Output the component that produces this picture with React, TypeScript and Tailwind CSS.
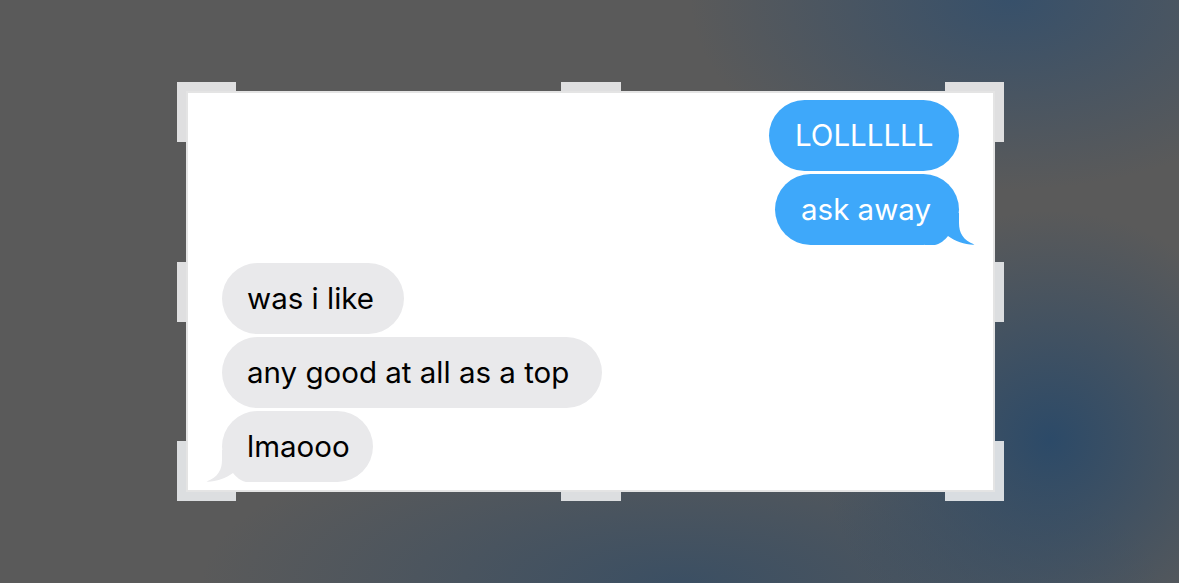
import React from "react";

const font = { fontFamily: "Inter, 'Liberation Sans', sans-serif" };

function Tail({ color, side }: { color: string; side: "left" | "right" }) {
  return (
    <svg
      width="50"
      height="32"
      viewBox="0 0 50 32"
      className={
        side === "right"
          ? "absolute -right-[16px] bottom-0"
          : "absolute -left-[16px] bottom-0 -scale-x-100"
      }
    >
      <path
        d="M34 0 L34 10 C34 20 38 27 49.5 31.6 C41 32 30 28.5 23 23 C20 27 15 31 10 32 L0 32 L0 0 Z"
        fill={color}
      />
    </svg>
  );
}

function Bubble({
  text,
  me,
  tail,
  w,
}: {
  text: string;
  me?: boolean;
  tail?: boolean;
  w: string;
}) {
  return (
    <div
      className={
        (me
          ? "relative h-[71px] rounded-[35.5px] bg-[#3ea8fa] text-white pl-[26px] flex items-center text-[29.5px] leading-none "
          : "relative h-[71px] rounded-[35.5px] bg-[#e9e9eb] text-black pl-[25px] flex items-center text-[29.5px] leading-none ") + w
      }
    >
      {tail && <Tail color={me ? "#3ea8fa" : "#e9e9eb"} side={me ? "right" : "left"} />}
      <span className="relative whitespace-nowrap">{text}</span>
    </div>
  );
}

export default function App() {
  return (
    <div
      className="w-full h-[583px] flex items-center justify-center bg-[#5a5a5a] bg-[radial-gradient(ellipse_320px_190px_at_1010px_0px,#37506a,transparent),radial-gradient(ellipse_230px_230px_at_1050px_440px,#2c4a68,transparent),radial-gradient(ellipse_480px_160px_at_680px_583px,#3b4f63,transparent)]"
      style={font}
    >
      <div className="relative w-[827px] h-[419px] ml-[2px]">
        {/* handles */}
        <div className="absolute left-0 top-0 w-[59px] h-[9px] bg-[#dfdfe0]" />
        <div className="absolute left-0 top-0 w-[9px] h-[60px] bg-[#dfdfe0]" />
        <div className="absolute right-0 top-0 w-[59px] h-[9px] bg-[#dfdfe0]" />
        <div className="absolute right-0 top-0 w-[9px] h-[60px] bg-[#dfdfe0]" />
        <div className="absolute left-0 bottom-0 w-[59px] h-[9px] bg-[#dcdee0]" />
        <div className="absolute left-0 bottom-0 w-[9px] h-[60px] bg-[#dcdee0]" />
        <div className="absolute right-0 bottom-0 w-[59px] h-[9px] bg-[#d9dde1]" />
        <div className="absolute right-0 bottom-0 w-[9px] h-[60px] bg-[#d9dde1]" />
        <div className="absolute left-[384px] top-0 w-[60px] h-[9px] bg-[#dfdfe0]" />
        <div className="absolute left-[384px] bottom-0 w-[60px] h-[9px] bg-[#dcdee0]" />
        <div className="absolute left-0 top-[180px] w-[9px] h-[60px] bg-[#dfdfe0]" />
        <div className="absolute right-0 top-[180px] w-[9px] h-[60px] bg-[#dcdee0]" />

        <div className="absolute inset-[9px] border-2 border-[#e4e4e4] bg-white">
          <div className="flex flex-col pt-[7px] pl-[34px] pr-[34px]">
            <div className="flex flex-col items-end gap-[3px]">
              <Bubble text="LOLLLLLL" me w="w-[190px]" />
              <Bubble text="ask away" me tail w="w-[184px]" />
            </div>
            <div className="flex flex-col items-start gap-[3px] mt-[18px]">
              <Bubble text="was i like" w="w-[182px]" />
              <Bubble text="any good at all as a top" w="w-[380px]" />
              <Bubble text="lmaooo" tail w="w-[151px]" />
            </div>
          </div>
        </div>
      </div>
    </div>
  );
}
